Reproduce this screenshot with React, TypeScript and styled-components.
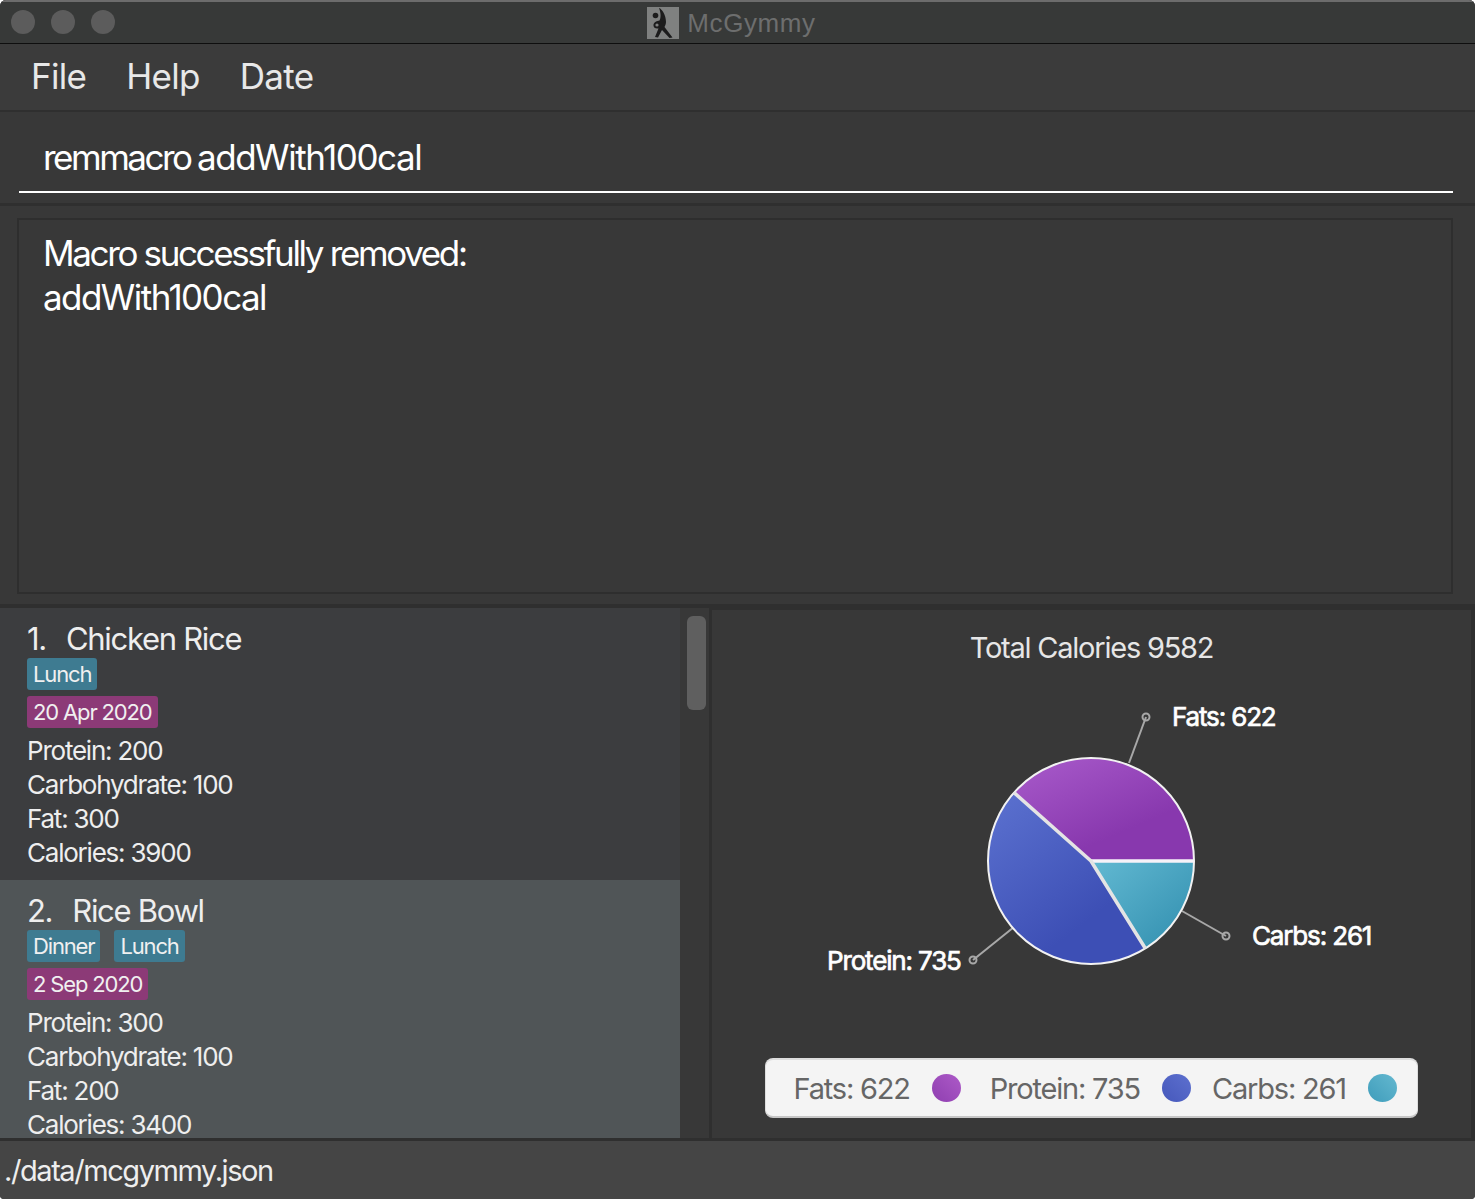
import styled, { createGlobalStyle } from 'styled-components';

const GlobalStyle = createGlobalStyle`
  html, body {
    margin: 0;
    padding: 0;
    background: #ffffff;
  }
  * {
    box-sizing: border-box;
  }
`;

const FONT = `Inter, "Liberation Sans", sans-serif`;

const Window = styled.div`
  width: 1475px;
  height: 1199px;
  display: flex;
  flex-direction: column;
  overflow: hidden;
  border-radius: 6px 6px 4px 4px;
  background: #383838;
  font-family: ${FONT};
  color: #ffffff;
`;

const TitleBar = styled.div`
  position: relative;
  height: 44px;
  flex: none;
  display: flex;
  align-items: center;
  justify-content: center;
  background: #373938;
  border-top: 2px solid #6c6c6c;
  border-bottom: 1px solid #0e0e0e;
`;

const Lights = styled.div`
  position: absolute;
  left: 11px;
  top: 8px;
  display: flex;
  gap: 16px;
`;

const Light = styled.span`
  width: 24px;
  height: 24px;
  border-radius: 50%;
  background: #5c5c5c;
`;

const AppIcon = styled.svg`
  width: 32px;
  height: 32px;
  margin-right: 8px;
`;

const AppTitle = styled.span`
  margin: 2px 12px 0 0;
  font-family: "Liberation Sans", Arial, sans-serif;
  font-size: 26px;
  letter-spacing: 0.6px;
  color: #6d6e6e;
`;

const MenuBar = styled.div`
  height: 68px;
  flex: none;
  display: flex;
  align-items: center;
  gap: 40px;
  padding: 0 31px 2px;
  background: #3b3b3b;
  border-bottom: 2px solid #2f2f2f;
`;

const MenuItem = styled.span`
  font-size: 35px;
  letter-spacing: -0.7px;
  color: #e8e8e8;
`;

const CommandArea = styled.div`
  height: 94px;
  flex: none;
  padding: 0 22px 0 19px;
  background: #383838;
  border-bottom: 3px solid #2f2f2f;
`;

const CommandInput = styled.div`
  height: 81px;
  padding: 22px 0 0 24px;
  border-bottom: 2px solid #ffffff;
  font-size: 35px;
  line-height: 46px;
  letter-spacing: -1.45px;
  word-spacing: -2px;
  white-space: nowrap;
`;

const CommandVerb = styled.span`
  letter-spacing: -2.5px;
`;

const ResultArea = styled.div`
  height: 402px;
  flex: none;
  padding: 12px 22px 10px 17px;
  background: #383838;
  border-bottom: 4px solid #2f2f2f;
`;

const ResultBox = styled.div`
  height: 100%;
  padding: 11px 24px;
  border: 2px solid #2e2e2e;
`;

const ResultLine = styled.div<{ $tracking: number }>`
  font-size: 35px;
  line-height: 44px;
  letter-spacing: ${(p) => p.$tracking}px;
  white-space: nowrap;
`;

const Split = styled.div`
  height: 530px;
  flex: none;
  display: flex;
  background: #383838;
`;

const ListPanel = styled.div`
  width: 712px;
  flex: none;
  display: flex;
  overflow: hidden;
  border-right: 3px solid #2f2f2f;
`;

const ListColumn = styled.div`
  width: 680px;
  flex: none;
  overflow: hidden;
`;

const Track = styled.div`
  flex: 1;
  padding: 8px 3px 0 7px;
  background: #383838;
`;

const Thumb = styled.div`
  width: 19px;
  height: 94px;
  border-radius: 6px;
  background: #5f5f5f;
`;

const Card = styled.div<{ $selected?: boolean }>`
  height: 272px;
  padding: 12px 0 0 27px;
  background: ${(p) => (p.$selected ? '#505557' : '#3c3d3f')};
`;

const CardTitle = styled.div`
  display: flex;
  gap: 20px;
  font-size: 31px;
  line-height: 38px;
  letter-spacing: -1.3px;
  color: #eeeeee;
`;

const TagRow = styled.div`
  display: flex;
  gap: 14px;
  margin-bottom: 6px;
`;

const Tag = styled.span<{ $kind: 'meal' | 'date' }>`
  height: 32px;
  padding: 0 6px;
  border-radius: 3px;
  font-size: 22px;
  line-height: 33px;
  letter-spacing: -1.15px;
  color: #f0f0f0;
  background: ${(p) => (p.$kind === 'meal' ? '#3e7b91' : '#8c3a77')};
`;

const Stat = styled.div`
  font-size: 26px;
  line-height: 34px;
  letter-spacing: -1.22px;
  color: #eeeeee;
`;

const ChartPanel = styled.div`
  flex: 1;
  display: flex;
  flex-direction: column;
  align-items: center;
  border-right: 4px solid #2f2f2f;
  border-top: 2px solid #2f2f2f;
`;

const ChartTitle = styled.div`
  margin-top: 20px;
  font-size: 29px;
  line-height: 36px;
  letter-spacing: -1.22px;
  color: #e6e6e6;
`;

const PieCanvas = styled.svg`
  display: block;
  width: 758px;
  height: 372px;
  flex: none;
  margin-top: 2px;
`;

const PieLabel = styled.text`
  font-family: ${FONT};
  font-size: 26px;
  letter-spacing: -1.15px;
  fill: #ffffff;
  stroke: #ffffff;
  stroke-width: 0.7px;
`;

const Legend = styled.div`
  width: 653px;
  height: 60px;
  margin: 18px 1px 0 0;
  display: flex;
  align-items: center;
  padding: 0 21px 0 28px;
  background: #f4f4f4;
  border-radius: 8px;
  border-top: 2px solid #dddddd;
  border-bottom: 2px solid #c6c6c6;
  border-left: 1px solid #dddddd;
  border-right: 1px solid #dddddd;
`;

const LegendItem = styled.div<{ $after: number }>`
  display: flex;
  align-items: center;
  gap: 22px;
  margin-right: ${(p) => p.$after}px;
`;

const LegendText = styled.span`
  font-size: 29px;
  letter-spacing: -1.2px;
  white-space: nowrap;
  color: #666666;
`;

const LegendDot = styled.span<{ $from: string; $to: string }>`
  width: 29px;
  height: 28px;
  border-radius: 50%;
  background: linear-gradient(45deg, ${(p) => p.$to}, ${(p) => p.$from});
`;

const StatusBar = styled.div`
  flex: 1;
  padding: 11px 0 0 4px;
  background: #454545;
  border-top: 3px solid #2f2f2f;
  font-size: 29px;
  line-height: 38px;
  letter-spacing: -1.43px;
  color: #eeeeee;
`;

interface Meal {
  index: number;
  name: string;
  tags: string[];
  date: string;
  stats: string[];
}

const MEALS: Meal[] = [
  {
    index: 1,
    name: 'Chicken Rice',
    tags: ['Lunch'],
    date: '20 Apr 2020',
    stats: ['Protein: 200', 'Carbohydrate: 100', 'Fat: 300', 'Calories: 3900'],
  },
  {
    index: 2,
    name: 'Rice Bowl',
    tags: ['Dinner', 'Lunch'],
    date: '2 Sep 2020',
    stats: ['Protein: 300', 'Carbohydrate: 100', 'Fat: 200', 'Calories: 3400'],
  },
];

const LEGEND = [
  { text: 'Fats: 622', from: '#ad5ac8', to: '#8f3fb0', after: 29 },
  { text: 'Protein: 735', from: '#5d70cf', to: '#4658bb', after: 21 },
  { text: 'Carbs: 261', from: '#64b8d0', to: '#3f9dbb', after: 0 },
];

const McGymmyIcon = () => (
  <AppIcon viewBox="0 0 32 32">
    <rect width="32" height="32" fill="#7f8180" />
    <circle cx="8.5" cy="8.5" r="2.8" fill="#1c1c1c" />
    <path
      d="M12 1 C15 2 19 8 19 15 C19 17 18 19 17.5 20 L25.5 30.5 L22.5 31 L15 23 L11 30.5 L8 30 L11.5 21.5 C8 22 6 20 6.5 17.5 C7 15 10 14 12.5 13.5 C14 11 14 6 12 1 Z"
      fill="#1c1c1c"
    />
    <circle cx="10" cy="18" r="1.6" fill="#7f8180" />
  </AppIcon>
);

const PieChart = () => (
  <PieCanvas viewBox="713 668 758 372">
    <defs>
      <linearGradient id="fats" x1="0" y1="0" x2="0.75" y2="1">
        <stop offset="0" stopColor="#a95bcb" />
        <stop offset="0.75" stopColor="#8838ae" />
      </linearGradient>
      <linearGradient id="protein" x1="0" y1="0" x2="0.7" y2="1">
        <stop offset="0" stopColor="#5c72d0" />
        <stop offset="0.8" stopColor="#3d4fb5" />
      </linearGradient>
      <linearGradient id="carbs" x1="0" y1="0" x2="1" y2="1">
        <stop offset="0" stopColor="#62b9d2" />
        <stop offset="0.8" stopColor="#3a96b5" />
      </linearGradient>
    </defs>
    <g stroke="#a8a8a8" strokeWidth="2" fill="none">
      <path d="M1129 763 L1146 717" />
      <circle cx="1146" cy="717" r="3.5" />
      <path d="M1182 911 L1226 936" />
      <circle cx="1226" cy="936" r="3.5" />
      <path d="M1014 927 L973 960" />
      <circle cx="973" cy="960" r="3.5" />
    </g>
    <g transform="translate(0 1)">
      <path d="M1091 860 L1194 860 A103 103 0 0 0 1014 791.6 Z" fill="url(#fats)" />
      <path d="M1091 860 L1014 791.6 A103 103 0 0 0 1145.4 947.5 Z" fill="url(#protein)" />
      <path d="M1091 860 L1145.4 947.5 A103 103 0 0 0 1194 860 Z" fill="url(#carbs)" />
      <circle cx="1091" cy="860" r="103" fill="none" stroke="#f2f2f2" strokeWidth="2" />
      <path d="M1194 860 L1091 860" stroke="#f6f2f8" strokeWidth="3.5" />
      <path d="M1091 860 L1014 791.6 M1091 860 L1145.4 947.5" stroke="#e4e4e4" strokeWidth="3.5" />
    </g>
    <PieLabel x="1172" y="726">Fats: 622</PieLabel>
    <PieLabel x="1252" y="945">Carbs: 261</PieLabel>
    <PieLabel x="827" y="970">Protein: 735</PieLabel>
  </PieCanvas>
);

const MealCard = ({ meal, selected }: { meal: Meal; selected?: boolean }) => (
  <Card $selected={selected}>
    <CardTitle>
      <span>{meal.index}.</span>
      <span>{meal.name}</span>
    </CardTitle>
    <TagRow>
      {meal.tags.map((tag) => (
        <Tag key={tag} $kind="meal">
          {tag}
        </Tag>
      ))}
    </TagRow>
    <TagRow>
      <Tag $kind="date">{meal.date}</Tag>
    </TagRow>
    {meal.stats.map((stat) => (
      <Stat key={stat}>{stat}</Stat>
    ))}
  </Card>
);

const App = () => (
  <>
    <GlobalStyle />
    <Window>
      <TitleBar>
        <Lights>
          <Light />
          <Light />
          <Light />
        </Lights>
        <McGymmyIcon />
        <AppTitle>McGymmy</AppTitle>
      </TitleBar>
      <MenuBar>
        <MenuItem>File</MenuItem>
        <MenuItem>Help</MenuItem>
        <MenuItem>Date</MenuItem>
      </MenuBar>
      <CommandArea>
        <CommandInput>
          <CommandVerb>remmacro</CommandVerb> addWith100cal
        </CommandInput>
      </CommandArea>
      <ResultArea>
        <ResultBox>
          <ResultLine $tracking={-2.36}>Macro successfully removed:</ResultLine>
          <ResultLine $tracking={-1.55}>addWith100cal</ResultLine>
        </ResultBox>
      </ResultArea>
      <Split>
        <ListPanel>
          <ListColumn>
            {MEALS.map((meal) => (
              <MealCard key={meal.index} meal={meal} selected={meal.index === 2} />
            ))}
          </ListColumn>
          <Track>
            <Thumb />
          </Track>
        </ListPanel>
        <ChartPanel>
          <ChartTitle>Total Calories 9582</ChartTitle>
          <PieChart />
          <Legend>
            {LEGEND.map((item) => (
              <LegendItem key={item.text} $after={item.after}>
                <LegendText>{item.text}</LegendText>
                <LegendDot $from={item.from} $to={item.to} />
              </LegendItem>
            ))}
          </Legend>
        </ChartPanel>
      </Split>
      <StatusBar>./data/mcgymmy.json</StatusBar>
    </Window>
  </>
);

export default App;
